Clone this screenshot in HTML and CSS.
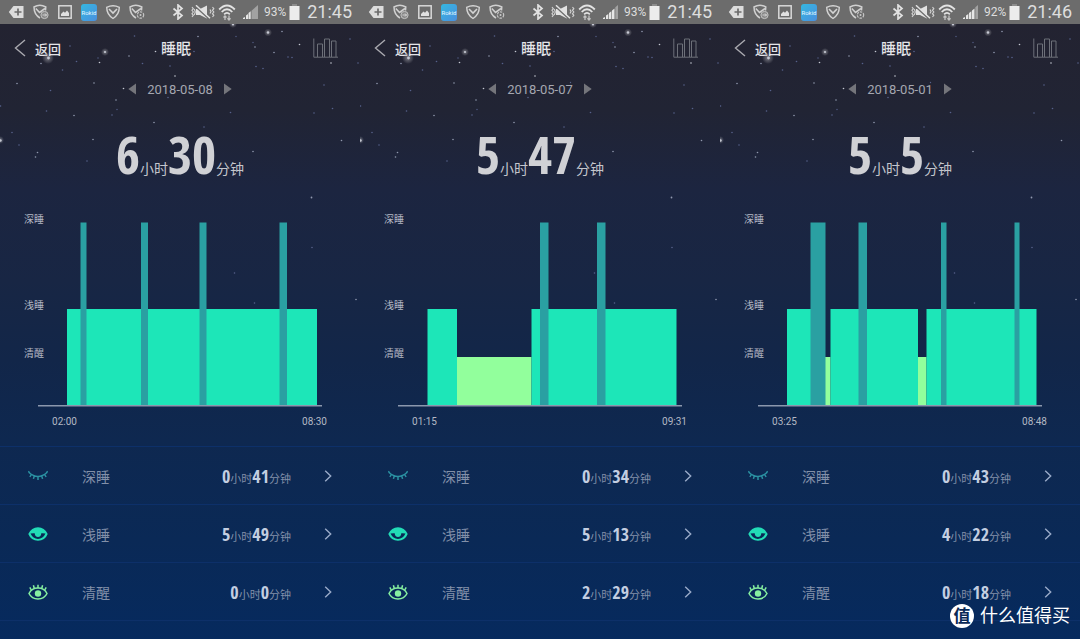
FILE: index.html
```html
<!DOCTYPE html>
<html lang="zh-CN">
<head>
<meta charset="utf-8">
<meta name="viewport" content="width=device-width, initial-scale=1">
<title>睡眠</title>
<link rel="stylesheet" href="styles.css">
</head>
<body>
<svg class="sprite" aria-hidden="true">
  <defs>
    <radialGradient id="glow"><stop offset="0" stop-color="#fff" stop-opacity=".4"/><stop offset="1" stop-color="#fff" stop-opacity="0"/></radialGradient>
  </defs>
  <symbol id="stars" viewBox="0 0 360 440">
    <g fill="url(#glow)"><circle cx="48" cy="58" r="6"/><circle cx="105" cy="52" r="4"/><circle cx="268" cy="32.500" r="4"/><circle cx="233" cy="24" r="4"/><circle cx="0" cy="140" r="4"/></g>
    <g fill="#c5c8d2"><circle cx="48.500" cy="58" r="1.400"/><circle cx="105" cy="52" r="1.100"/><circle cx="268" cy="32.500" r="1.200"/><circle cx="233" cy="24.500" r="1.100"/><circle cx="0.500" cy="140.500" r="1.200"/><circle cx="331" cy="63" r=".8"/><circle cx="299.500" cy="44.500" r=".8"/><circle cx="99.500" cy="62.500" r=".8"/><circle cx="123.500" cy="88.500" r=".8"/><circle cx="155.500" cy="51.500" r=".8"/><circle cx="175" cy="76" r=".8"/></g>
    <g fill="#9098ae"><circle cx="17" cy="83.500" r=".8"/><circle cx="94" cy="83" r=".8"/><circle cx="116" cy="100" r=".8"/><circle cx="74" cy="115.500" r=".8"/><circle cx="154" cy="122.500" r=".8"/><circle cx="93" cy="139.500" r=".8"/><circle cx="37.500" cy="152.500" r=".8"/><circle cx="35.500" cy="157" r=".8"/><circle cx="253" cy="151.500" r=".8"/><circle cx="341.500" cy="140.500" r=".8"/><circle cx="311.500" cy="197.500" r=".9"/><circle cx="282" cy="31.500" r=".8"/><circle cx="198" cy="36.500" r=".8"/><circle cx="255" cy="47" r=".8"/><circle cx="274" cy="52.500" r=".8"/><circle cx="129" cy="56" r=".8"/><circle cx="41" cy="63.500" r=".8"/><circle cx="356" cy="299.500" r=".8"/></g>
    <g fill="#56618a"><circle cx="134.500" cy="36" r=".8"/><circle cx="236" cy="36.500" r=".7"/><circle cx="253" cy="42.500" r=".7"/><circle cx="70" cy="46" r=".8"/><circle cx="76.500" cy="61.500" r=".8"/><circle cx="98" cy="58" r=".7"/><circle cx="62.500" cy="70" r=".8"/><circle cx="142.500" cy="63.500" r=".8"/><circle cx="170" cy="66" r=".8"/><circle cx="194" cy="51.500" r=".8"/><circle cx="256" cy="66.500" r=".8"/><circle cx="263" cy="68.500" r=".8"/><circle cx="288" cy="57" r=".8"/><circle cx="292" cy="57.500" r=".8"/><circle cx="350" cy="39" r=".8"/><circle cx="358" cy="63" r=".8"/><circle cx="324" cy="85" r=".8"/><circle cx="332.500" cy="108.500" r=".8"/><circle cx="314" cy="113" r=".8"/><circle cx="230.500" cy="112.500" r=".8"/><circle cx="204" cy="127" r=".8"/><circle cx="168" cy="97.500" r=".8"/><circle cx="210.500" cy="82.500" r=".7"/><circle cx="117" cy="109.500" r=".7"/><circle cx="112" cy="115" r=".8"/><circle cx="50.500" cy="90.500" r=".8"/><circle cx="46.500" cy="111" r=".8"/><circle cx="0.500" cy="106" r=".8"/><circle cx="12" cy="132.500" r=".8"/><circle cx="19" cy="145" r=".8"/><circle cx="87" cy="161" r=".8"/><circle cx="312" cy="247.500" r=".8"/><circle cx="234.500" cy="273" r=".8"/><circle cx="254.500" cy="303" r=".8"/></g>
  </symbol>
  <symbol id="i-tag" viewBox="0 0 16 14"><path d="M5.500 1H15.500v12H5.500L.8 7z" fill="#dcdcdc"/><path d="M10 3.500v7M6.500 7h7" stroke="#6c6c6c" stroke-width="1.700"/></symbol>
  <symbol id="i-shield" viewBox="1 0 14 16"><path d="M1.700 3.300Q8 .3 14.300 3.300 14.300 10.500 8 14.500 1.700 10.500 1.700 3.300z" fill="none" stroke="#d4d4d4" stroke-width="1.400"/><path d="M4 5l4 4 4-4" fill="none" stroke="#d4d4d4" stroke-width="1.600"/></symbol>
  <symbol id="i-shield-badge" viewBox="0 0 16 16"><path d="M12.500 6.500l.3-3.500Q6.800-.3 1 3q0 7.500 6 11" fill="none" stroke="#d0d0d0" stroke-width="1.500"/><path d="M2.800 4.500L6.500 8.500l5.500-4" fill="none" stroke="#d0d0d0" stroke-width="1.600"/><circle cx="11.500" cy="11" r="3.600" fill="#888" stroke="#c4c4c4" stroke-width="1"/><path d="M9.500 11h4M12 9.500l1.500 1.500-1.500 1.500" fill="none" stroke="#ddd" stroke-width=".9"/></symbol>
  <symbol id="i-shield-target" viewBox="0 0 16 16"><path d="M12.500 6.500l.3-3.500Q6.800-.3 1 3q0 7.500 6 11" fill="none" stroke="#d0d0d0" stroke-width="1.500"/><path d="M2.800 4.500L6.500 8.500l5.500-4" fill="none" stroke="#d0d0d0" stroke-width="1.600"/><circle cx="11.500" cy="11" r="3.200" fill="none" stroke="#c4c4c4" stroke-width="1.200" stroke-dasharray="2.500 1"/><circle cx="11.500" cy="11" r="1" fill="#ccc"/></symbol>
  <symbol id="i-image" viewBox="0 0 14 14"><rect x=".8" y=".8" width="12.400" height="12.400" fill="none" stroke="#d8d8d8" stroke-width="1.500"/><path d="M3 11V9l2.500-2.500 1.500 1.300L9 5.500l2 2.500v3z" fill="#e0e0e0"/></symbol>
  <symbol id="i-bt" viewBox="0 0 12 16"><path d="M1.500 4.500l8.500 7L6 15V1l4 3.500-8.500 7" fill="none" stroke="#e2e2e2" stroke-width="1.700"/></symbol>
  <symbol id="i-mute" viewBox="0 0 24 14"><path d="M5 4h4l7-3.500v13L9 10H5z" fill="#e2e2e2"/><path d="M5 1.800l13 12" stroke="#6c6c6c" stroke-width="1.800"/><path d="M5 .3l14 13" stroke="#e2e2e2" stroke-width="1.500"/><path d="M1 2l1.300 1.700L1 5.300 2.300 7 1 8.700l1.300 1.600L1 12M3.300 4L4.300 7 3.300 10M21.500 2l1.300 1.700-1.300 1.600L22.800 7l-1.300 1.700 1.300 1.600-1.300 1.700M19 4.500l1 2-1 2" fill="none" stroke="#d0d0d0" stroke-width="1.200"/></symbol>
  <symbol id="i-wifi" viewBox="0 0 18 18"><path d="M1.200 6.500Q9-1.500 16.800 6.500M3.700 9Q9 3.500 14.300 9M6.200 11.300Q9 8.500 11.800 11.300" fill="none" stroke="#e4e4e4" stroke-width="1.800"/><path d="M7 17v-4M5.500 14.500L7 13l1.500 1.500M11 12.500v4.500M9.500 15.300L11 17l1.500-1.700" fill="none" stroke="#c4c4c4" stroke-width="1.300"/></symbol>
  <symbol id="i-signal" viewBox="0 0 16 16"><path d="M0 15v-1l2-1v2zM3 15v-3.500l2.300-1.500v5zM6 15V9l2.400-1.700V15z" fill="#e6e6e6"/><path d="M9 15V6.500l2.500-2V15z" fill="#e6e6e6"/><path d="M12.300 15V3.300L15 1v14z" fill="#a2a2a2"/></symbol>
  <symbol id="i-signal-low" viewBox="0 0 16 16"><path d="M0 15v-1l2-1v2zM3 15v-3.500l2-1.500v5z" fill="#e6e6e6"/><path d="M5.500 15V9l2.200-1.700V15z" fill="#e6e6e6"/><path d="M8.500 15V6.800L15 1v14z" fill="#a2a2a2"/></symbol>
  <symbol id="i-battery" viewBox="0 0 11 16"><path d="M3 0h5v2.500H3z" fill="#8c8c8c"/><path d="M.5 2h10v14H.5z" fill="#ececec"/></symbol>
  <symbol id="i-back" viewBox="0 0 12 18"><path d="M11 1L1.500 9l9.500 8" fill="none" stroke="#a9a9af" stroke-width="1.400"/></symbol>
  <symbol id="i-chart" viewBox="0 0 25 20"><path d="M.8.5v18.700H25M4.500 19V6h5v13M11.500 19V1h5v18M18.500 19V3h4.500v16" fill="none" stroke="#6d7079" stroke-width="1"/></symbol>
  <symbol id="i-prev" viewBox="0 0 8 12"><path d="M8 .5v11L.3 6z" fill="#74757b"/></symbol>
  <symbol id="i-next" viewBox="0 0 8 12"><path d="M0 .5v11L7.700 6z" fill="#74757b"/></symbol>
  <symbol id="i-chevron" viewBox="0 0 8 12"><path d="M1.200.8L6.700 6l-5.500 5.200" fill="none" stroke="#9aabc9" stroke-width="1.400"/></symbol>
  <symbol id="i-deep" viewBox="0 0 20 18"><path d="M1 5.500Q9.900 13.500 19 5.500M1.700 6L.3 4.200M18.300 6l1.400-1.800M3.300 7.500L1.900 10M6.400 8.700l-1 3.200M10 9.500v3.500M13.600 8.700l1 3.200M16.700 7.500l1.400 2.500" fill="none" stroke="#2b92a3" stroke-width="1.500"/></symbol>
  <symbol id="i-light" viewBox="0 0 20 18"><path fill-rule="evenodd" d="M.3 9Q3.500 2.300 10 2.300T19.700 9Q17 15.700 10 15.700T.3 9zM2.500 8.600Q5 14 10 14t7.500-5.400Q15.500 8 13.300 8.200 13 12 10 12T6.700 8.200Q4.500 8 2.500 8.600z" fill="#22dcb6"/></symbol>
  <symbol id="i-awake" viewBox="0 0 20 18"><path d="M1 10.500Q3.700 5 10 5t9 5.500Q16.300 16 10 16t-9-5.500z" fill="none" stroke="#86f0a0" stroke-width="1.500"/><circle cx="10" cy="10.500" r="3.200" fill="#86f0a0"/><path d="M3.300 7L1.800 4.300M6.300 5.500L5.400 2.200M10 5V1.700M13.700 5.500l.9-3.300M16.700 7l1.500-2.700" stroke="#86f0a0" stroke-width="1.500"/></symbol>
</svg>

<main class="phones">
  <section class="phone">
    <svg class="sky" aria-hidden="true"><use href="#stars"/></svg>
    <div class="status">
      <div class="notices"><svg class="s16"><use href="#i-tag"/></svg><svg class="s16"><use href="#i-shield-badge"/></svg><svg class="s14"><use href="#i-image"/></svg><span class="app">Rokid</span><svg class="shield"><use href="#i-shield"/></svg><svg class="s16"><use href="#i-shield-target"/></svg></div>
      <div class="system"><svg class="bt"><use href="#i-bt"/></svg><svg class="mute"><use href="#i-mute"/></svg><svg class="wifi"><use href="#i-wifi"/></svg><svg class="s16"><use href="#i-signal-low"/></svg><span class="percent">93%</span><svg class="battery"><use href="#i-battery"/></svg><time class="clock">21:45</time></div>
    </div>
    <header class="bar"><button class="back"><svg><use href="#i-back"/></svg>返回</button><h1>睡眠</h1><button class="stats" aria-label="统计"><svg><use href="#i-chart"/></svg></button></header>
    <div class="date"><button aria-label="前一天"><svg><use href="#i-prev"/></svg></button><time>2018-05-08</time><button aria-label="后一天"><svg><use href="#i-next"/></svg></button></div>
    <p class="total"><b>6</b>小时<b>30</b>分钟</p>
    <svg class="chart" viewBox="0 205 360 241" role="img" aria-label="睡眠图">
      <rect class="light" x="67" y="309" width="250" height="96"/>
      <rect class="deep" x="80.500" y="222.500" width="6" height="182.500"/><rect class="deep" x="141" y="222.500" width="7" height="182.500"/><rect class="deep" x="199.500" y="222.500" width="7" height="182.500"/><rect class="deep" x="279.500" y="222.500" width="7.500" height="182.500"/>
      <rect class="axis" x="38" y="405" width="284" height="1.500"/>
      <text x="24" y="223">深睡</text><text x="24" y="309">浅睡</text><text x="24" y="357">清醒</text>
      <text class="hour" x="64.500" y="425">02:00</text><text class="hour" x="314.500" y="425">08:30</text>
    </svg>
    <div class="rows">
      <button class="row"><svg class="eye"><use href="#i-deep"/></svg><span class="name">深睡</span><span class="length"><b>0</b>小时<b>41</b>分钟</span><svg class="go"><use href="#i-chevron"/></svg></button>
      <button class="row"><svg class="eye"><use href="#i-light"/></svg><span class="name">浅睡</span><span class="length"><b>5</b>小时<b>49</b>分钟</span><svg class="go"><use href="#i-chevron"/></svg></button>
      <button class="row"><svg class="eye"><use href="#i-awake"/></svg><span class="name">清醒</span><span class="length"><b>0</b>小时<b>0</b>分钟</span><svg class="go"><use href="#i-chevron"/></svg></button>
    </div>
  </section>

  <section class="phone">
    <svg class="sky" aria-hidden="true"><use href="#stars"/></svg>
    <div class="status">
      <div class="notices"><svg class="s16"><use href="#i-tag"/></svg><svg class="s16"><use href="#i-shield-badge"/></svg><svg class="s14"><use href="#i-image"/></svg><span class="app">Rokid</span><svg class="shield"><use href="#i-shield"/></svg><svg class="s16"><use href="#i-shield-target"/></svg></div>
      <div class="system"><svg class="bt"><use href="#i-bt"/></svg><svg class="mute"><use href="#i-mute"/></svg><svg class="wifi"><use href="#i-wifi"/></svg><svg class="s16"><use href="#i-signal"/></svg><span class="percent">93%</span><svg class="battery"><use href="#i-battery"/></svg><time class="clock">21:45</time></div>
    </div>
    <header class="bar"><button class="back"><svg><use href="#i-back"/></svg>返回</button><h1>睡眠</h1><button class="stats" aria-label="统计"><svg><use href="#i-chart"/></svg></button></header>
    <div class="date"><button aria-label="前一天"><svg><use href="#i-prev"/></svg></button><time>2018-05-07</time><button aria-label="后一天"><svg><use href="#i-next"/></svg></button></div>
    <p class="total"><b>5</b>小时<b>47</b>分钟</p>
    <svg class="chart" viewBox="0 205 360 241" role="img" aria-label="睡眠图">
      <rect class="light" x="67.500" y="309" width="29.500" height="96"/><rect class="awake" x="97" y="357" width="74.500" height="48"/><rect class="light" x="171.500" y="309" width="145" height="96"/>
      <rect class="deep" x="180" y="222.500" width="8.500" height="182.500"/><rect class="deep" x="237" y="222.500" width="8.500" height="182.500"/>
      <rect class="axis" x="38" y="405" width="284" height="1.500"/>
      <text x="24" y="223">深睡</text><text x="24" y="309">浅睡</text><text x="24" y="357">清醒</text>
      <text class="hour" x="64.500" y="425">01:15</text><text class="hour" x="314.500" y="425">09:31</text>
    </svg>
    <div class="rows">
      <button class="row"><svg class="eye"><use href="#i-deep"/></svg><span class="name">深睡</span><span class="length"><b>0</b>小时<b>34</b>分钟</span><svg class="go"><use href="#i-chevron"/></svg></button>
      <button class="row"><svg class="eye"><use href="#i-light"/></svg><span class="name">浅睡</span><span class="length"><b>5</b>小时<b>13</b>分钟</span><svg class="go"><use href="#i-chevron"/></svg></button>
      <button class="row"><svg class="eye"><use href="#i-awake"/></svg><span class="name">清醒</span><span class="length"><b>2</b>小时<b>29</b>分钟</span><svg class="go"><use href="#i-chevron"/></svg></button>
    </div>
  </section>

  <section class="phone">
    <svg class="sky" aria-hidden="true"><use href="#stars"/></svg>
    <div class="status">
      <div class="notices"><svg class="s16"><use href="#i-tag"/></svg><svg class="s16"><use href="#i-shield-badge"/></svg><svg class="s14"><use href="#i-image"/></svg><span class="app">Rokid</span><svg class="shield"><use href="#i-shield"/></svg><svg class="s16"><use href="#i-shield-target"/></svg></div>
      <div class="system"><svg class="bt"><use href="#i-bt"/></svg><svg class="mute"><use href="#i-mute"/></svg><svg class="wifi"><use href="#i-wifi"/></svg><svg class="s16"><use href="#i-signal"/></svg><span class="percent">92%</span><svg class="battery"><use href="#i-battery"/></svg><time class="clock">21:46</time></div>
    </div>
    <header class="bar"><button class="back"><svg><use href="#i-back"/></svg>返回</button><h1>睡眠</h1><button class="stats" aria-label="统计"><svg><use href="#i-chart"/></svg></button></header>
    <div class="date"><button aria-label="前一天"><svg><use href="#i-prev"/></svg></button><time>2018-05-01</time><button aria-label="后一天"><svg><use href="#i-next"/></svg></button></div>
    <p class="total"><b>5</b>小时<b>5</b>分钟</p>
    <svg class="chart" viewBox="0 205 360 241" role="img" aria-label="睡眠图">
      <rect class="light" x="67" y="309" width="24" height="96"/><rect class="awake" x="105" y="357" width="5.500" height="48"/><rect class="light" x="110.500" y="309" width="87.500" height="96"/><rect class="awake" x="198" y="357" width="8.500" height="48"/><rect class="light" x="206.500" y="309" width="110" height="96"/>
      <rect class="deep" x="90.500" y="222.500" width="15" height="182.500"/><rect class="deep" x="138.500" y="222.500" width="8.500" height="182.500"/><rect class="deep" x="221" y="222.500" width="5.500" height="182.500"/><rect class="deep" x="294.500" y="222.500" width="5" height="182.500"/>
      <rect class="axis" x="38" y="405" width="284" height="1.500"/>
      <text x="24" y="223">深睡</text><text x="24" y="309">浅睡</text><text x="24" y="357">清醒</text>
      <text class="hour" x="64.500" y="425">03:25</text><text class="hour" x="314.500" y="425">08:48</text>
    </svg>
    <div class="rows">
      <button class="row"><svg class="eye"><use href="#i-deep"/></svg><span class="name">深睡</span><span class="length"><b>0</b>小时<b>43</b>分钟</span><svg class="go"><use href="#i-chevron"/></svg></button>
      <button class="row"><svg class="eye"><use href="#i-light"/></svg><span class="name">浅睡</span><span class="length"><b>4</b>小时<b>22</b>分钟</span><svg class="go"><use href="#i-chevron"/></svg></button>
      <button class="row"><svg class="eye"><use href="#i-awake"/></svg><span class="name">清醒</span><span class="length"><b>0</b>小时<b>18</b>分钟</span><svg class="go"><use href="#i-chevron"/></svg></button>
    </div>
  </section>
</main>
<div class="watermark"><span class="seal">值</span>什么值得买</div>
</body>
</html>
```
FILE: styles.css
```css
* { box-sizing: border-box; }
body {
  margin: 0;
  position: relative;
  font-family: Roboto, "Noto Sans CJK SC", sans-serif;
  background: #06295c;
}
button {
  border: 0;
  padding: 0;
  background: none;
  color: inherit;
  font: inherit;
  cursor: pointer;
}
svg { display: block; flex: none; }
.sprite { position: absolute; width: 0; height: 0; }
.phones {
  display: grid;
  grid-template-columns: repeat(3, 1fr);
  min-height: 100vh;
}
.phone {
  position: relative;
  overflow: hidden;
  background: linear-gradient(#232331 24px, #212434 110px, #1c2540 190px, #182644 280px, #122649 360px, #0e2850 440px, #0a2956 540px, #062a5e 100%);
}
.phone > * { position: relative; }
.phone > .sky {
  position: absolute;
  top: 0;
  left: 0;
  width: 100%;
  height: 440px;
}
.status {
  display: flex;
  justify-content: space-between;
  align-items: center;
  height: 24px;
  padding: 0 8px;
  background: #6c6c6c;
  color: #dedede;
}
.notices, .system { display: flex; align-items: center; }
.notices { gap: 9px; }
.system { gap: 3px; }
.s16 { width: 16px; height: 16px; }
.s14 { width: 14px; height: 14px; }
.shield { width: 14px; height: 16px; }
.app {
  width: 16px;
  height: 17px;
  border-radius: 3px;
  background: linear-gradient(135deg, #35b8e0, #4a8fe0);
  color: #e6f6ff;
  font-size: 6px;
  line-height: 17px;
  text-align: center;
}
.bt { width: 12px; height: 16px; margin-right: 4px; }
.mute { width: 24px; height: 14px; }
.wifi { width: 18px; height: 18px; margin-right: 4px; }
.percent { padding-left: 2px; font-size: 12px; line-height: 24px; }
.battery { width: 11px; height: 16px; }
.clock { padding-left: 4px; font-size: 18px; line-height: 24px; }
.bar {
  display: grid;
  grid-template-columns: 1fr auto 1fr;
  align-items: center;
  height: 48px;
  padding: 0 22px 0 14px;
  color: #e4e4e8;
}
.back {
  display: flex;
  align-items: center;
  gap: 9px;
  justify-self: start;
  font-size: 13px;
  font-weight: 500;
}
.back svg { width: 12px; height: 18px; }
.bar h1 { margin: 0; padding-bottom: 2px; font-size: 15px; font-weight: 500; }
.stats { justify-self: end; }
.stats svg { width: 25px; height: 20px; }
.date {
  display: flex;
  justify-content: center;
  align-items: center;
  gap: 11px;
  height: 34px;
  color: #a5a7b0;
  font-size: 13px;
}
.date svg { width: 8px; height: 12px; }
.total {
  display: flex;
  justify-content: center;
  align-items: baseline;
  height: 99px;
  margin: 0;
  color: #c4c6cc;
  font-size: 14px;
  line-height: 96px;
}
.total b, .length b {
  font-family: "Open Sans Condensed", "Roboto Condensed", sans-serif;
  font-weight: 700;
}
.total b { color: #d0d1d5; font-size: 52px; }
.chart { width: 100%; height: auto; }
.chart text { fill: #b3b8c4; font-size: 10px; }
.chart .hour { text-anchor: middle; }
.light { fill: #1de6b8; }
.deep { fill: #2aa0a2; }
.awake { fill: #92ff9c; }
.axis { fill: #8b97ad; }
.rows { border-bottom: 1px solid #0d3069; }
.row {
  display: flex;
  align-items: center;
  width: 100%;
  height: 58px;
  padding: 0 28px;
  border-top: 1px solid #0d3069;
  color: #8290a9;
  text-align: left;
}
.eye { width: 20px; height: 18px; }
.name { flex: 1; padding-left: 34px; font-size: 14px; }
.length { display: flex; align-items: baseline; font-size: 11px; }
.length b { color: #c3cee1; font-size: 18px; }
.go { width: 8px; height: 12px; margin-left: 33px; }
.watermark {
  position: absolute;
  right: 10px;
  bottom: 10px;
  display: flex;
  align-items: center;
  gap: 6px;
  color: #fff;
  font-size: 18px;
  line-height: 26px;
}
.seal {
  width: 24px;
  height: 24px;
  border-radius: 50%;
  background: #fff;
  color: #0a2956;
  font-size: 17px;
  font-weight: 700;
  line-height: 24px;
  text-align: center;
}
```
